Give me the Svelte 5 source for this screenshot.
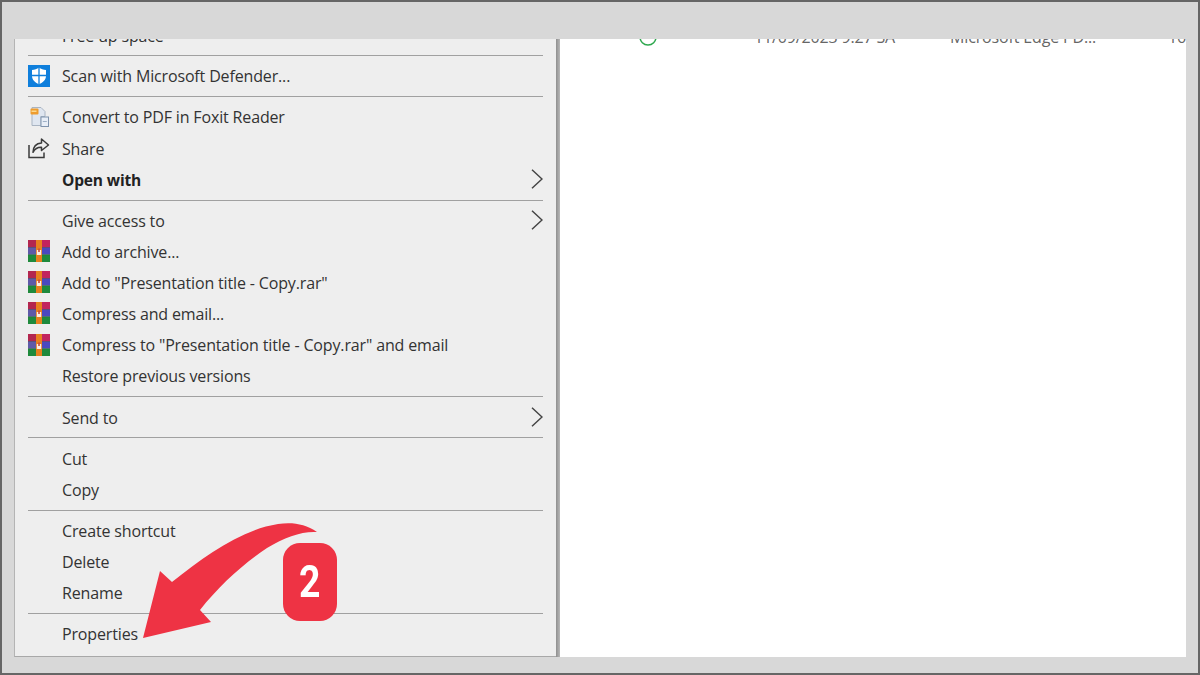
<script>
  // menu sections, separated by a rule
  const sections = [
    [{ label: 'Scan with Microsoft Defender...', icon: 'defender' }],
    [
      { label: 'Convert to PDF in Foxit Reader', icon: 'foxit' },
      { label: 'Share', icon: 'share' },
      { label: 'Open with', bold: true, more: true }
    ],
    [
      { label: 'Give access to', more: true },
      { label: 'Add to archive...', icon: 'rar' },
      { label: 'Add to "Presentation title - Copy.rar"', icon: 'rar' },
      { label: 'Compress and email...', icon: 'rar' },
      { label: 'Compress to "Presentation title - Copy.rar" and email', icon: 'rar' },
      { label: 'Restore previous versions' }
    ],
    [{ label: 'Send to', more: true }],
    [{ label: 'Cut' }, { label: 'Copy' }],
    [{ label: 'Create shortcut' }, { label: 'Delete' }, { label: 'Rename' }],
    [{ label: 'Properties' }]
  ];
</script>

{#snippet icon(name)}
  {#if name === 'defender'}
    <svg width="22" height="22" viewBox="0 0 22 22">
      <rect width="22" height="22" fill="#0f7fdc" />
      <path d="M11 2.800c2 1.300 4.400 2 7 2.200v6c0 3.700-2.800 6.400-7 8.200-4.200-1.800-7-4.500-7-8.200V5c2.600-.2 5-.9 7-2.200z" fill="#fff" />
      <path d="M11 3v16M4 10.500h14" stroke="#0f7fdc" stroke-width="1.300" fill="none" />
    </svg>
  {:else if name === 'foxit'}
    <svg class="soft" width="22" height="22" viewBox="0 0 22 22">
      <path d="M4 1.500h9l4 4v5H13v9H4z" fill="#dfe6f0" stroke="#a9b4c2" stroke-width="1" />
      <rect x="2.500" y="2.500" width="8" height="6" rx="1" fill="#ee9c2e" />
      <rect x="3.500" y="4.500" width="5" height="1.500" fill="#fbd98f" />
      <rect x="13" y="11" width="7.500" height="9.500" fill="#e8eef7" stroke="#7f93ad" stroke-width="1" />
      <path d="M14.800 15.500h4" stroke="#9fb0c6" stroke-width="1" />
    </svg>
  {:else if name === 'share'}
    <svg width="22" height="22" viewBox="0 0 22 22" fill="none" stroke="#3b3b3b" stroke-width="1.500">
      <path d="M1 8v12.500h15v-5" />
      <path d="M13.500 2l7 6-7 5.500v-3.200c-3.600-.2-6.400 1.200-8.500 5 .2-5.500 3.200-8.800 8.500-9.200z" stroke-linejoin="round" />
    </svg>
  {:else if name === 'rar'}
    <svg class="soft" width="22" height="22" viewBox="0 0 22 22">
      <rect y="0" width="22" height="7" fill="#b3264f" />
      <rect x="14" y="0" width="8" height="7" fill="#c2245e" />
      <rect y="7.500" width="8" height="7" fill="#5f5aa8" />
      <rect x="14" y="7.500" width="8" height="7" fill="#4a48c0" />
      <rect y="15" width="22" height="7" fill="#1f8a3c" />
      <rect y="7" width="22" height=".8" fill="#4b3a66" />
      <rect y="14.300" width="22" height=".8" fill="#2c5f4c" />
      <rect x="8" width="6" height="22" fill="#e8801f" />
      <path d="M8.800 10h4.400v5H8.800z" fill="#fbeee2" />
      <rect x="10.200" y="8.500" width="1.600" height="3.500" fill="#c9483a" />
    </svg>
  {/if}
{/snippet}

<div class="frame">
  <div class="band top"></div>

  <div class="body">
    <div class="menu">
      <div class="clipped"><span>Free up space</span></div>
      {#each sections as rows}
        <div class="rule"></div>
        {#each rows as row}
          <div class="row" class:bold={row.bold}>
            <span class="ico">{#if row.icon}{@render icon(row.icon)}{/if}</span>
            <span class="label">{row.label}</span>
            {#if row.more}
              <svg class="more" width="12" height="20" viewBox="0 0 12 20" fill="none" stroke="#444" stroke-width="1.500">
                <path d="M1 .8l10 9.200-10 9.200" />
              </svg>
            {/if}
          </div>
        {/each}
      {/each}
    </div>

    <div class="divider"></div>

    <div class="pane">
      <div class="file">
        <svg class="sync" width="18" height="18" viewBox="0 0 18 18" fill="none" stroke="#2fa84f" stroke-width="1.500">
          <circle cx="9" cy="9" r="8" />
        </svg>
        <span class="date">11/09/2023 9:27 SA</span>
        <span class="type">Microsoft Edge PD...</span>
        <span class="size">16</span>
      </div>
    </div>
  </div>

  <div class="band bottom"></div>

  <!-- callout drawn over the menu -->
  <svg class="arrow" width="190" height="125" viewBox="135 520 190 125">
    <path d="M317 532C305 524 293 522 278 524C240 530 205 556 172 582L160 571L143 638L211 622L200 610C220 585 242 565 267 548C285 537 302 531 317 532z" fill="#ee3344" />
  </svg>
  <div class="badge"><span>2</span></div>
</div>

<style>
  :global(body) {
    margin: 0;
    background: #d8d8d8;
  }

  .frame {
    position: relative;
    width: 1200px;
    height: 675px;
    box-sizing: border-box;
    border: 2px solid #666;
    background: #d8d8d8;
    display: flex;
    flex-direction: column;
    overflow: hidden;
    font-family: "Open Sans", "Noto Sans", sans-serif;
    color: #333;
  }

  .band.top {
    height: 37px;
    flex: none;
  }

  .band.bottom {
    height: 16px;
    flex: none;
  }

  .body {
    flex: 1;
    display: flex;
    min-height: 0;
    padding: 0 12px;
  }

  .menu {
    width: 542px;
    box-sizing: border-box;
    flex: none;
    background: #eee;
    border-left: 1px solid #b4b4b4;
    border-bottom: 1px solid #a8a8a8;
    padding: 0 13px;
    overflow: hidden;
  }

  .clipped {
    height: 11px;
    padding-left: 34px;
    overflow: hidden;
    position: relative;
    font-size: 16px;
    letter-spacing: -0.15px;
    line-height: 20px;
  }

  .clipped span {
    display: block;
    margin-top: -13px;
  }

  .rule {
    height: 1px;
    margin: 5px 0 4px;
    background: #a0a0a0;
  }

  .row {
    height: 31.125px;
    display: flex;
    align-items: center;
    font-size: 16px;
    letter-spacing: -0.15px;
  }

  .row.bold {
    font-weight: 700;
    font-size: 15.5px;
    color: #222;
  }

  .ico {
    width: 34px;
    flex: none;
    display: flex;
    align-items: center;
  }

  .soft {
    filter: blur(0.35px);
  }

  .label {
    flex: 1;
    white-space: nowrap;
    padding-top: 1.6px;
  }

  .more {
    flex: none;
  }

  .divider {
    width: 4px;
    flex: none;
    background: linear-gradient(90deg, #8f8f8f, #b8b8b8);
  }

  .pane {
    flex: 1;
    background: #fff;
    overflow: hidden;
  }

  .file {
    display: flex;
    align-items: center;
    height: 18px;
    margin-top: -11px;
    padding-left: 79px;
    font-size: 16px;
    letter-spacing: -0.15px;
    color: #666;
    white-space: nowrap;
  }

  .sync {
    flex: none;
  }

  .date {
    margin-left: 97px;
    width: 197px;
  }

  .type {
    width: 219px;
  }

  .badge {
    position: absolute;
    left: 281px;
    top: 541px;
    width: 54px;
    height: 78px;
    border-radius: 17px;
    background: #ee3344;
    color: #fff;
    display: flex;
    align-items: center;
    justify-content: center;
    font-family: Roboto, sans-serif;
    font-weight: 700;
    font-size: 44px;
  }

  .badge span {
    transform: scaleX(0.85);
  }

  .arrow {
    position: absolute;
    left: 133px;
    top: 518px;
  }
</style>
